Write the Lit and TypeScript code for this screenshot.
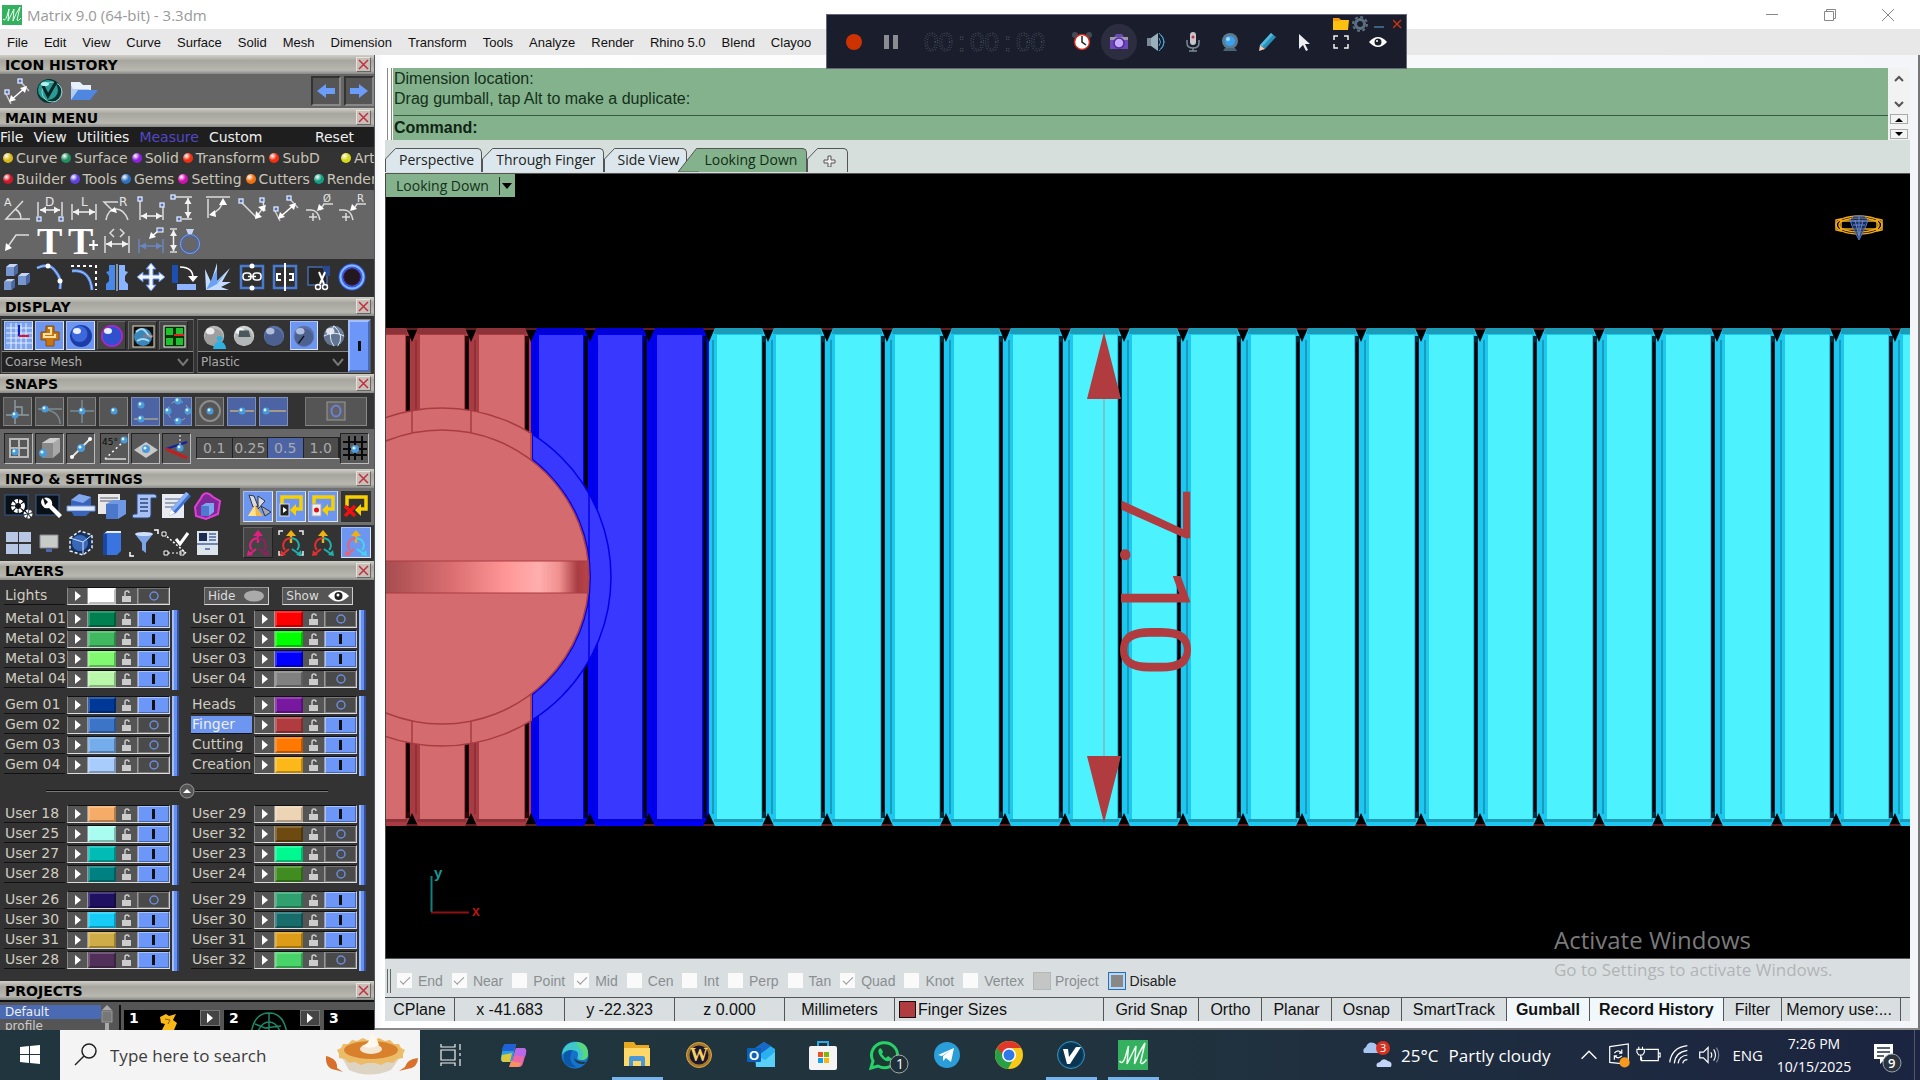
import { LitElement, html, css, svg, nothing } from "lit";
import { customElement } from "lit/decorators.js";
import { classMap } from "lit/directives/class-map.js";

type Layer = [name: string, color: string, on: boolean];

/* ---------- small drawing helpers ---------- */
const arrowH = (a: number, b: number, y: number, c = "#f2f2f2") =>
  svg`<path d="M${a} ${y}H${b}" stroke=${c} stroke-width="1.5"/><path fill=${c} d="M${a} ${y}l6-3.5v7zM${b} ${y}l-6-3.5v7z"/>`;
const arrowV = (a: number, b: number, x: number, c = "#f2f2f2") =>
  svg`<path d="M${x} ${a}V${b}" stroke=${c} stroke-width="1.5"/><path fill=${c} d="M${x} ${a}l-3.5 6h7zM${x} ${b}l-3.5-6h7z"/>`;
const knot = (x: number, y: number) =>
  svg`<rect x=${x - 2} y=${y - 2} width="4" height="4" fill="#5070b8" stroke="#dfe8ff" stroke-width="1.3"/>`;
const bead = (x: number, y: number, r = 3.5) =>
  svg`<circle cx=${x} cy=${y} r=${r} fill="#4a9ad8"/><circle cx=${x - 1} cy=${y - 1} r=${r / 2.5} fill="#d8f2ff"/>`;
const line = (d: string, c = "#dcdcdc", w = 1.5) =>
  svg`<path d=${d} fill="none" stroke=${c} stroke-width=${w}/>`;
const glyph = (t: string, x: number, y: number, size: number, c = "#e6e6e6") =>
  svg`<text x=${x} y=${y} font-size=${size} font-family="DejaVu Sans, sans-serif" fill=${c}>${t}</text>`;
const gumball = (a: string, b: string, c: string) => svg`
  <path d="M14 14V5" stroke=${a} stroke-width="2.4"/><path d="M14 1l-5 6h10z" fill=${a}/>
  <path d="M14 9C5 10 5 18 8 21M12 20L6 25" fill="none" stroke=${b} stroke-width="2"/><path d="M3 27l1-6 5 5z" fill=${b}/>
  <path d="M14 9C23 10 23 18 20 21M15 20L22 25" fill="none" stroke=${c} stroke-width="2"/><path d="M25 27l-1-6-5 5z" fill=${c}/>`;
const corners = line("M2 6V2H6M22 2H26V6M26 22V26H22M6 26H2V22", "#f0f0f0");
const cube = (x: number, y: number, s: number) => svg`
  <path d="M${x} ${y + s * 0.25}l${s * 0.3} ${-s * 0.25}h${s * 0.7}l${-s * 0.3} ${s * 0.25}z" fill="#c4d6f4"/>
  <path d="M${x} ${y + s * 0.25}h${s * 0.7}v${s * 0.75}h${-s * 0.7}z" fill="#7796d0"/>
  <path d="M${x + s * 0.7} ${y + s * 0.25}l${s * 0.3} ${-s * 0.25}v${s * 0.75}l${-s * 0.3} ${s * 0.25}z" fill="#4a68a8"/>`;
const yellowLoop = svg`<path d="M5 14V5H24V17H18" fill="none" stroke="#f8d000" stroke-width="3.500"/><path d="M13 18l6-6v12z" fill="#f8d000"/>`;
const mLogo = svg`<rect width="20" height="20" fill="#34b05e"/><path d="M1 14Q3 17 5 11L7 4 6 16Q10 8 12 4L11 16Q14 8 18 2L15 15Q16 17 19 13" fill="none" stroke="#eafff0" stroke-width="1"/>`;
const ball = (fill: string, hi = "#fff") =>
  svg`<circle cx="14" cy="14" r="11" fill=${fill}/><circle cx="14" cy="16" r="10" fill="#000" opacity=".14"/><ellipse cx="10" cy="9" rx="4.5" ry="3.5" fill=${hi} opacity=".8"/>`;

/* Icons share a 28 by 28 grid. */
const I: Record<string, unknown> = {
  measure: svg`${line("M4 17L9 27M18 4L27 14", "#c8c8c8")}${line("M8 24L24 10", "#fff")}<path d="M7 25l2-7 5 5zM25 9l-7 2 5 5z" fill="#fff"/>${knot(5, 15)}${knot(18, 4)}`,
  vball: svg`<circle cx="13" cy="14" r="12" fill="#06302f"/><circle cx="12" cy="13" r="10" fill="#2a9a94"/><circle cx="16" cy="15" r="10" fill="none" stroke="#7fd8d0"/><path d="M7 9l5 10 8-14" fill="none" stroke="#052423" stroke-width="3"/><ellipse cx="9" cy="7" rx="4" ry="2" fill="#b8f0ec"/>`,
  folder: svg`<path d="M1 5h9l3 3h8v5H1z" fill="#e8f0fc"/><path d="M1 8v15h18V12H3z" fill="#b4cdf4"/><path d="M1 23l7-10h20l-8 10z" fill="#4f86e0"/>`,
  back: svg`<path d="M5 14l9-7v4h9v6h-9v4z" fill="#6a9cf8"/>`,
  fwd: svg`<path d="M23 14l-9-7v4H5v6h9v4z" fill="#6a9cf8"/>`,
  angle: svg`${line("M27 25H3L20 7M12 15q6 3 6 10")}${glyph("A", 1, 12, 11)}`,
  dimD: svg`${line("M2 8V22M26 8V22")}${arrowH(4, 24, 16)}${knot(3, 25)}${knot(25, 25)}${glyph("D", 9, 12, 12)}`,
  dimL: svg`${line("M2 10V26M26 10V26")}${arrowH(3, 25, 18)}${glyph("L", 11, 12, 12)}`,
  dimR: svg`${line("M15 8H1l8 8M3 26q2-11 10-11t12 11")}<path d="M14 19l-7-2 5-4z" fill="#fff"/>${glyph("R", 16, 12, 12)}`,
  dimH: svg`${line("M3 7V26M26 12V26")}${arrowH(4, 25, 22)}${knot(3, 5)}${knot(25, 11)}`,
  dimV: svg`${line("M5 3H22M12 25H22")}${arrowV(4, 24, 18)}${knot(3, 3)}${knot(9, 25)}`,
  ordinate: svg`${line("M2 3H26M4 5V24M7 20Q18 16 19 6")}<path d="M19 4l4 7h-8zM5 21l6-5 1 7z" fill="#fff"/>`,
  dimA: svg`${line("M3 8L19 24M25 8L27 17M19 22L25 14")}<path d="M17 25l1-8 6 6zM28 11l-8 2 6 5z" fill="#fff"/>${knot(3, 7)}${knot(24, 6)}`,
  diam: svg`${line("M28 10H19L15 16M1 16h5q7 0 9 10M4 23h8M8 19v8")}<path d="M12 17l2-7 5 5z" fill="#fff"/>${glyph("Ø", 18, 8, 10)}`,
  rad: svg`${line("M28 10H19L15 16M1 16h5q7 0 9 10M4 23h8M8 19v8")}<path d="M12 17l2-7 5 5z" fill="#fff"/>${glyph("R", 19, 8, 10)}`,
  leader: svg`${line("M4 21L13 8H26")}<path d="M2 24l1-8 6 5z" fill="#fff"/>`,
  text: svg`<text x="1" y="27" font-family="Liberation Serif, serif" font-weight="700" font-size="38" fill="#fff">T</text>`,
  textPlus: svg`<text x="-2" y="27" font-family="Liberation Serif, serif" font-weight="700" font-size="38" fill="#fff">T</text>${line("M19 18h9M23.500 13v10", "#fff", 2)}`,
  dimAng: svg`${line("M2 9V26M26 9V26M11 2L7 6l4 4M17 2l4 4-4 4")}${arrowH(3, 25, 17)}`,
  dimLead: svg`${line("M2 12V26M26 12V26", "#6a86c0")}${arrowH(3, 25, 19, "#6a86c0")}${line("M14 10L21 4", "#fff")}<path d="M12 12l2-7 5 5z" fill="#fff"/><rect x="20" y="1" width="6" height="4" fill="#5070b8" stroke="#fff"/>`,
  ring: svg`${line("M0 2H7M0 25H7")}${arrowV(3, 24, 3.5)}<circle cx="20" cy="17" r="9" fill="none" stroke="#4a66a8" stroke-width="3"/><circle cx="20" cy="17" r="9.500" fill="none" stroke="#86a0dc"/><path d="M16 2h8l-2 5h-4z" fill="#c8d4f0"/>`,
  cubes: svg`${cube(3, 1, 12)}${cube(15, 10, 12)}${cube(1, 16, 11)}`,
  arc: svg`${line("M1 5Q14-1 20 9 26 16 24 26", "#5a8ae8", 3)}${line("M1 5Q14-1 20 9 26 16 24 26", "#a8c8ff", 1)}<circle cx="12" cy="3" r="2.500" fill="#fff"/><circle cx="24" cy="18" r="2.500" fill="#fff"/>`,
  arcDots: svg`${line("M2 8Q20 6 22 27", "#5a8ae8", 3)}${line("M2 8Q20 6 22 27", "#a8c8ff", 1)}<path d="M1 3H26V27" stroke="#fff" stroke-width="2" stroke-dasharray="3 3" fill="none"/>`,
  puzzle: svg`<path d="M12 2H6v6l-3 1 3 4v5l-3 3v6h9z" fill="#4a88e8"/><path d="M16 2h6v6l3 1-3 4v5l3 3v6h-9z" fill="#89b4ff"/><path d="M14 1V28" stroke="#e8f0ff"/>`,
  move: svg`<path d="M14 0l5 6h-3v6h6V9l6 5-6 5v-3h-6v6h3l-5 6-5-6h3v-6H6v3l-6-5 6-5v3h6V6H9z" fill="#f2f6ff" stroke="#5a8ae8"/>`,
  rotate: svg`<path d="M2 2h6v18H2z" fill="#1b4fb0"/><path d="M7 21h19v6H7z" fill="#8fb4ff"/>${line("M10 4Q23 4 23 15", "#fff")}<path d="M18 13h10l-5 6z" fill="#fff"/>`,
  burst: svg`<path d="M2 27L1 6l6 13L13 0v18L26 5 18 19l9 0-10 5 8 3z" fill="#c4dcff"/><path d="M2 27L13 6v13L22 10 13 21z" fill="#6ca0f4"/>`,
  link: svg`<rect x="3" y="3" width="22" height="22" fill="none" stroke="#4a7ad0" stroke-width="2.500"/><rect x="5" y="10" width="8" height="7" rx="3" fill="none" stroke="#fff" stroke-width="1.500"/><rect x="15" y="10" width="8" height="7" rx="3" fill="none" stroke="#fff" stroke-width="1.500"/><path d="M10 13.500h8" stroke="#fff" stroke-width="1.500"/><circle cx="14" cy="3" r="2.500" fill="#fff"/><circle cx="14" cy="25" r="2.500" fill="#fff"/>`,
  unlink: svg`<rect x="3" y="3" width="22" height="22" fill="none" stroke="#4a7ad0" stroke-width="2.500"/><path d="M10 11H6v6h4M18 11h4v6h-4" stroke="#fff" stroke-width="2" fill="none"/><path d="M14 0V28" stroke="#fff" stroke-width="2"/>`,
  cut: svg`<path d="M3 4H22V22H3z" fill="#222" stroke="#4a6aa8" stroke-width="1.500"/><path d="M17 3H25V13H20z" fill="#2a4a90"/><path d="M14 9l5 12M20 9l-5 12" stroke="#fff" stroke-width="2"/><circle cx="13" cy="24" r="2.500" fill="none" stroke="#fff" stroke-width="1.500"/><circle cx="20" cy="24" r="2.500" fill="none" stroke="#fff" stroke-width="1.500"/>`,
  torus: svg`<circle cx="14" cy="14" r="11" fill="#241820" stroke="#2c60e8" stroke-width="5"/><circle cx="14" cy="14" r="11.500" fill="none" stroke="#8cb4ff" stroke-width="2"/><circle cx="14" cy="14" r="8" fill="none" stroke="#501030"/>`,
  grid: svg`<path d="M1 1H27V27H1z" fill="#7ea4ec"/>${line("M1 6H27M1 11H27M1 16H27M1 21H27M6 1V27M11 1V27M16 1V27M21 1V27", "#e4edff", 1)}${line("M14 3V14", "#1020c0", 2)}${line("M14 14H24", "#e01030", 2)}`,
  jack: svg`<path d="M10 4h8v6h5v8h-5v6h-8v-6H5v-8h5z" fill="#c87410" stroke="#8a4c08"/><path d="M12 6h3v6H8v3h11v-3" stroke="#ffe0a0" fill="none" stroke-width="2"/>`,
  ballBlue: svg`<circle cx="14" cy="14" r="11" fill="#1c3ca8"/><circle cx="12.500" cy="12" r="8" fill="#3c68dc"/><ellipse cx="10" cy="9" rx="4" ry="3" fill="#e8f0ff"/>`,
  ballPink: svg`<circle cx="14" cy="14" r="11" fill="#c020c8"/><circle cx="14" cy="14" r="9.500" fill="#3050d0"/><ellipse cx="10" cy="9" rx="4" ry="3" fill="#e8f0ff"/>`,
  globe: svg`<rect x="4" y="4" width="21" height="21" fill="#111" stroke="#e8e0c0"/><circle cx="14" cy="15" r="9" fill="#3a86b8"/><path d="M7 10q6-6 10 0t6 4M8 19q6-4 12 0" stroke="#a4d8f4" stroke-width="2" fill="none"/>${line("M14 14H24", "#f06040", 1)}`,
  views: svg`<rect x="4" y="4" width="21" height="21" fill="#063006" stroke="#e8f8e8"/><path d="M6 6h7v7H6zM16 6h7v7h-7zM6 16h7v7H6zM16 16h7v7h-7z" fill="#20c030"/>${line("M14 13H24", "#e02020", 2)}`,
  matUser: svg`${ball("#b8b8b8")}<circle cx="20" cy="17" r="3" fill="#30b0e0"/><path d="M13 28q1-8 7-8t7 8z" fill="#30b0e0"/>`,
  matBox: svg`${ball("#d0d4d4")}<path d="M9 8h10l2 7H8z" fill="#4a585c"/>`,
  matSphere: ball("#5a72a8", "#c8d4f0"),
  matDisplay: svg`${ball("#5a72a8", "#c8d4f0")}${line("M14 14L8 22", "#111")}`,
  matWire: svg`${ball("#7288a8")}${line("M3 14Q14 8 25 14M14 3Q6 14 14 25M14 3Q26 14 18 25", "#e8f0ff", 1)}`,
  sPerp: svg`${line("M11 3V27M2 18H25M11 10H18V18", "#8a9aa0")}${bead(11, 18)}`,
  sTan: svg`${line("M2 12H26M2 12Q24 12 24 27", "#7c8a90")}${bead(9, 12)}`,
  sInt: svg`${line("M14 3V26M2 14H26", "#7c8a90")}${bead(14, 14)}`,
  sPoint: bead(14, 14),
  sMid2: svg`${line("M2 22H26", "#a8a090")}${bead(9, 8)}${bead(9, 22)}`,
  sQuad: svg`<circle cx="14" cy="14" r="10" fill="none" stroke="#a0a8b0" stroke-dasharray="4 4"/>${bead(14, 4)}${bead(4, 14)}${bead(24, 14)}${bead(14, 24)}`,
  sCen: svg`<circle cx="14" cy="14" r="10" fill="none" stroke="#8c8c8c" stroke-width="2"/>${bead(14, 14)}`,
  sMid: svg`${line("M2 14H26", "#a89888", 2)}${bead(14, 14)}`,
  sEnd: svg`${line("M8 14H26", "#a89888", 2)}${bead(6, 14)}`,
  sO: svg`<rect x="5" y="5" width="18" height="18" fill="#626262" stroke="#999"/><ellipse cx="14" cy="14" rx="4.500" ry="5.500" fill="none" stroke="#6c80d8" stroke-width="2"/>`,
  gCplane: svg`${line("M5 5H23V23H5zM14 5V23M5 14H23", "#b8b8b8", 2)}${bead(10, 18)}`,
  gCube: svg`<path d="M6 9l8-5h10v14l-7 6H6z" fill="#a8a8a8"/><path d="M6 9h11v15H6z" fill="#888"/><path d="M6 9l8-5h10l-7 5z" fill="#ccc"/>${bead(7, 19, 4)}`,
  gLine: svg`${line("M5 23L23 5", "#e0e0e0", 2)}<circle cx="5" cy="23" r="2" fill="#fff"/><circle cx="23" cy="5" r="2" fill="#fff"/>${bead(14, 14, 4)}`,
  g45: svg`<path d="M4 25L22 8" stroke="#fff" stroke-width="1.500" stroke-dasharray="2 3"/>${line("M4 25H25")}${glyph("45°", 1, 11, 9, "#0a0a0a")}${bead(23, 6)}`,
  gPlane: svg`<path d="M2 16l12-8 12 8-12 8z" fill="#c8c8c8"/>${bead(14, 15, 4)}`,
  gAxis: svg`${line("M3 15L24 8", "#1020a0", 2)}${line("M3 15L24 24", "#c02020", 3)}<path d="M17 1V14" stroke="#fff" stroke-dasharray="2 2"/>${bead(17, 14)}`,
  gHash: svg`${line("M8 2V26M14 2V26M21 2V26M2 8H26M2 15H26M2 21H26", "#0a0a0a", 2)}${bead(14, 15, 4)}`,
  iGears: svg`<rect x="1" y="3" width="23" height="20" fill="#0a1018" stroke="#3a5a90"/><circle cx="14" cy="14" r="5" fill="none" stroke="#fff" stroke-width="4" stroke-dasharray="3 1"/><circle cx="24" cy="22" r="3" fill="none" stroke="#fff" stroke-width="3" stroke-dasharray="2 1"/>`,
  iWrench: svg`<rect x="1" y="3" width="23" height="20" fill="#0a1018" stroke="#3a5a90"/><path d="M8 6a6 6 0 0 0 6 10l10 10 3-3-10-10a6 6 0 0 0-8-7l4 4-3 3z" fill="#fff"/>`,
  iBox: svg`<path d="M4 8l8-6 12 3v9l-8 2-12-2z" fill="#3a64b8"/><path d="M4 8l8-6 12 3-8 6z" fill="#84a8ec"/><path d="M0 14h28v5H0z" fill="#dde8fc" stroke="#6c94e0"/><path d="M4 19h20l-5 5H7z" fill="#3a64b8"/>`,
  iDocBox: svg`<path d="M0 2h22v20H0z" fill="#e8e8e8"/>${line("M2 6h18M2 9h18", "#889")}<path d="M8 12l7-4h13v14l-8 5H8z" fill="#6e98e4"/><path d="M8 12h12v15H8z" fill="#4c78cc"/>`,
  iScroll: svg`<path d="M7 2h17q3 0 3 4h-6v17q0 3-3 3H3q-2-3 1-4h3z" fill="#a8c0f4" stroke="#28487c"/>${line("M10 7h8M10 11h8M10 15h8M10 19h8", "#28487c")}`,
  iEdit: svg`<path d="M1 2h22v24H1z" fill="#e8ecf2"/>${line("M4 7h16M4 11h14M4 15h10", "#8090a8")}<path d="M25 0l5 4L15 21l-7 3 2-7z" fill="#3c70d0"/><path d="M25 0l3 2L13 19l-3-2z" fill="#8cb0f4"/><path d="M8 24l2-7 4 4z" fill="#fff"/>`,
  iBag: svg`<path d="M2 15L8 6Q12-3 20 5L27 9 25 22 13 27 3 24z" fill="#802898" stroke="#e040d8" stroke-width="2"/><path d="M8 14l5-3h8v9l-5 4H8z" fill="#7ea4f0"/><path d="M8 14h8v10H8z" fill="#5078d0"/>`,
  iViews: svg`<path d="M2 3h12v10H2zM15 3h12v10H15zM2 15h12v10H2zM15 15h12v10H15z" fill="#b8c8e4"/>`,
  iMonitor: svg`<path d="M5 6h18v13H5z" fill="#c8ccc8" stroke="#889"/><path d="M11 20h6v3h-6z" fill="#4a6ab0"/>`,
  iWire: svg`<path d="M3 9l10-7 12 4v13l-9 7L3 22z" fill="#16305c" stroke="#f0f0f0" stroke-width="1.500" stroke-dasharray="3 2"/><circle cx="13" cy="14" r="8" fill="#3a68b8"/>${line("M3 9l13 4 9-7M16 13v13", "#cfe0ff", 1)}`,
  iBook: svg`<path d="M5 5l4-3h14v20l-4 4H5z" fill="#3a74e0"/><path d="M9 2h14v2H7z" fill="#e4ecff"/><path d="M5 5h4v21H5z" fill="#1a48a0"/>`,
  iFunnel: svg`<path d="M5 5h18l-7 9v10l-4-3v-7z" fill="#7ea4e8"/><ellipse cx="14" cy="5" rx="9" ry="2" fill="#cfe0ff"/>${line("M24 1h4v4M0 23v4h4", "#fff")}`,
  iCheck: svg`<path d="M3 5L25 24" stroke="#fff" stroke-dasharray="2 2" stroke-width="1.500"/>${line("M15 10l4 5 8-11", "#fff", 3)}<path d="M1 3h4v4H1zM3 22h4v4H3zM19 22h4v4h-4z" stroke="#fff" fill="#222"/><path d="M7 24H26" stroke="#fff" stroke-dasharray="2 2"/>`,
  iReport: svg`<path d="M4 2h21v24H4z" fill="#dde4ec"/><path d="M6 4h8v8H6z" fill="#1c2c50"/>${line("M16 5h7M16 8h7M16 11h7M4 15h21M12 20h5", "#4868a0")}`,
  iBroom: svg`<path d="M5 3l5 1 4 10-5 1zM14 4l7 5-7 8z" fill="#d8dce0" stroke="#334"/><path d="M4 24l7-11 8 11z" fill="#f0b848"/><path d="M4 24l7-11 1 11z" fill="#ffe08c"/><path d="M17 14l10 6-6 4z" fill="#a0a8b4" stroke="#334"/>`,
  iPlay: svg`${yellowLoop}<rect x="3" y="12" width="9" height="12" fill="#222" stroke="#ddd"/><path d="M6 15l4 3-4 3z" fill="#fff"/>`,
  iRec: svg`${yellowLoop}<rect x="3" y="12" width="9" height="12" fill="#eee" stroke="#aaa"/><circle cx="7.500" cy="18" r="2.500" fill="#e01010"/>`,
  iDel: svg`${yellowLoop}${line("M3 14L13 24M13 14L3 24", "#f01010", 3.5)}`,
  gumA: gumball("#e02080", "#e02080", "#902060"),
  gumB: svg`${corners}${gumball("#f0b010", "#e03030", "#20b0b0")}`,
  gumC: gumball("#f0b010", "#e03030", "#20b0b0"),
  gumD: gumball("#f0b010", "#f06070", "#40d8e8"),
  record: svg`<circle cx="14" cy="14" r="8" fill="#cc3300"/>`,
  pause: svg`<path d="M7 7h5v14H7zM16 7h5v14h-5z" fill="#8a8c92"/>`,
  alarm: svg`<circle cx="7" cy="7" r="3" fill="#444a55"/><circle cx="21" cy="7" r="3" fill="#444a55"/><circle cx="14" cy="14" r="7.500" fill="#fff" stroke="#cc2a1e" stroke-width="1.500"/><path d="M14 8v6l4 3" fill="none" stroke="#222" stroke-width="1.500"/>`,
  camera: svg`<path d="M5 9h4l2-3h6l2 3h4v12H5z" fill="#6c48b8"/><path d="M5 9h18v3H5z" fill="#9a9aa8"/><circle cx="14" cy="15" r="5" fill="#c8a8ff" stroke="#4c2a94" stroke-width="1.500"/>`,
  speaker: svg`<path d="M5 10h4v8H5z" fill="#7a8a96"/><path d="M9 10l7-5v18l-7-5z" fill="#9ab0bc"/>${line("M17 10q3 4 0 8M19 7q6 7 0 14M17 5q10 9 0 18", "#4aa8d8", 1)}`,
  mic: svg`<rect x="11" y="4" width="6" height="13" rx="3" fill="#c8c4cc"/><circle cx="14" cy="9" r="1.500" fill="#d03040"/>${line("M8 12v3q0 5 6 5t6-5v-3M14 20v3M10 23h8", "#7c8a98", 1.5)}`,
  webcam: svg`<circle cx="14" cy="13" r="8" fill="#5a7c90"/><circle cx="14" cy="13" r="5" fill="#3aa0f0"/><circle cx="12" cy="11" r="2" fill="#a8dcff"/><path d="M9 20h10l2 3H7z" fill="#4a6474"/>`,
  pencil: svg`<path d="M18 5l5 4L12 21l-5-4z" fill="#2a90b8"/><path d="M7 17l5 4-6 2z" fill="#f4c8b0"/><path d="M18 5l2 2L9 19l-2-2z" fill="#50b8dc"/>`,
  cursor: svg`<path d="M9 6v15l4-4 3 6 2-1-3-6h5z" fill="#eceef2"/>`,
  expand: line("M7 12V8H11M17 8H21V12M21 16V20H17M11 20H7V16", "#f2f2f2", 1.5),
  eye: svg`<path d="M5 14q9-10 18 0-9 10-18 0z" fill="#fff"/><circle cx="14" cy="14" r="3.500" fill="#1a1e2a"/><circle cx="13" cy="13" r="1" fill="#fff"/>`,
  /* taskbar */
  windows: svg`<path d="M4 6l9-1v8H4zM14 5l10-1v9H14zM4 14h9v8l-9-1zM14 14h10v9l-10-1z" fill="#fff"/>`,
  taskview: line("M4 9H18V19H4zM4 3V6H18V3M4 25V22H18V25M23 3V9M23 12V15M23 18V25", "#f0f0f0", 1.2),
  copilot: svg`<path d="M7 3h10l-4 18H5Q1 21 2 16L4 6q1-3 3-3z" fill="#28a0e0"/><path d="M7 3h10l-2 7H3L4 6q1-3 3-3z" fill="#2060d8"/><path d="M3 14l10-2-2 9H5q-4 0-2-7z" fill="#d8c840"/><path d="M17 7h7q4 0 3 5l-3 10q-1 4-4 4H11z" fill="#e868a8"/><path d="M17 7h7q4 0 3 5l-1 4-11-2z" fill="#b868e8"/><path d="M12 20l10 2q-1 4-4 4h-8z" fill="#f89060"/>`,
  edge: svg`<circle cx="14" cy="14" r="13.500" fill="#1474cc"/><path d="M1 13Q3 1 15 1t12 12q0 6-7 6-5 0-3-4 1-6-6-6Q4 9 1 14z" fill="#40c8c8"/><path d="M15 1q12 1 12 12 0 6-7 6 5-8-2-13z" fill="#58d878"/><path d="M10 13q-3 8 5 13Q6 27 3 20 1 9 11 9z" fill="#0c58a8"/><path d="M13 15q0 6 12 6l-2 2q-10 1-10-8z" fill="#203840"/>`,
  explorer: svg`<path d="M1 1h10l2 3h13v6H1z" fill="#e8a820"/><path d="M1 7h26v18H1z" fill="#ffd867"/><path d="M6 25v-8q0-2 2-2h12q2 0 2 2v8h-4v-5h-8v5z" fill="#4a98d8"/>`,
  wcoin: svg`<circle cx="14" cy="14" r="11" fill="#181830" stroke="#a87828" stroke-width="3"/><circle cx="14" cy="14" r="12.500" fill="none" stroke="#d8a848"/><text x="5" y="20" font-family="Liberation Serif, serif" font-weight="700" font-size="18" fill="#f8d060">W</text>`,
  outlook: svg`<path d="M7 8L17 1l11 7v18H9z" fill="#2ab0f0"/><path d="M7 8L17 1l7 4-12 9z" fill="#1868c8"/><path d="M9 14l9 5 10-8v15H9z" fill="#58d0f8"/><rect x="0" y="7" width="14" height="14" rx="1" fill="#0c60b8"/><text x="2" y="19" font-family="Liberation Sans, sans-serif" font-weight="700" font-size="13" fill="#fff">O</text>`,
  store: svg`<path d="M9 6V1h10v5" fill="none" stroke="#30a8e8" stroke-width="2"/><rect x="0" y="5" width="28" height="24" rx="2" fill="#f4f4f4"/><path d="M9 11h5v5H9z" fill="#f05020"/><path d="M15 11h5v5h-5z" fill="#80b810"/><path d="M9 17h5v5H9z" fill="#10a0e8"/><path d="M15 17h5v5h-5z" fill="#f8b810"/>`,
  whatsapp: svg`<path d="M0 27l2-7a13 12.500 0 1 1 5 5z" fill="#1c3a34" stroke="#28d068" stroke-width="3"/><path d="M8 8q2-2 3 1l1 2-1 2q2 3 4 4l2-2 3 2q1 2-2 3-4 1-8-4-4-5-2-8z" fill="#28d068"/><circle cx="28" cy="23" r="9" fill="#203038" stroke="#a8a8a8"/><text x="25" y="28" font-family="Open Sans, sans-serif" font-size="14" fill="#fff">1</text>`,
  telegram: svg`<circle cx="14" cy="14" r="13" fill="#2a9ed8"/><path d="M5 14L21 7l-3 14-5-4-3 3v-5l8-6-9 6z" fill="#fff"/>`,
  chrome: svg`<circle cx="14" cy="14" r="14" fill="#f8c818"/><path d="M1.900 7A14 14 0 0 1 26.100 7H14L8 17z" fill="#e03828"/><path d="M1.900 7A14 14 0 0 0 13 28l6-11-9-1z" fill="#28a048"/><circle cx="14" cy="14" r="7" fill="#fff"/><circle cx="14" cy="14" r="5.500" fill="#3078e8"/>`,
  vapp: svg`<circle cx="14" cy="14" r="13.500" fill="#0c4468" stroke="#3a90b8"/><circle cx="14" cy="14" r="11.500" fill="#0a3450"/><path d="M6 8h5l1 8 7-10h5L13 23h-3z" fill="#fff"/>`,
  matrix: svg`<g transform="translate(-1 -1) scale(1.500)">${mLogo}</g>`,
  weather: svg`<path d="M24 12a9 9 0 1 1-18 11 10 10 0 0 0 18-11z" fill="#f8a830"/><path d="M1 12q-2-4 2-6 2-6 8-4 4 2 3 5 3 1 1 5z" fill="#a8c4f0"/><path d="M14 26q-2-4 3-5 3-5 8-1 5 1 3 6z" fill="#c4d4f8"/><circle cx="20" cy="7" r="7" fill="#d83020"/><text x="17" y="11" font-family="Open Sans, sans-serif" font-size="11" fill="#fff">3</text>`,
  chevUp: line("M6 18l8-8 8 8", "#fff", 1.5),
  sync: svg`${line("M4 5L24 2V24L4 22z", "#fff", 1.3)}${line("M9 12q4-5 8 0M17 15q-4 4-8 0M17 8v4h-3M9 19v-4h3", "#fff", 1.3)}<circle cx="20" cy="22" r="5.500" fill="#f8981c"/>`,
  battery: svg`${line("M10 8H24V20H6V16M24 12H26V16H24M3 5V8M7 5V8M1 8H9V11L7 14H3L1 11zM5 14V20", "#fff", 1.2)}`,
  wifi: svg`${line("M4 22Q6 6 23 4M9 23Q10 11 23 9", "#fff", 1.3)}${line("M13 23Q14 15 23 14M18 23q1-4 5-4", "#fff", 1.3)}`,
  sound: svg`${line("M4 11H8L13 6V22L8 17H4z", "#fff", 1.3)}${line("M16 11q2 3 0 6M19 8q4 6 0 12", "#fff", 1.2)}${line("M22 6q5 8 0 16", "#7a8498", 1.3)}`,
  notes: svg`<path d="M4 3h19v15h-8l-5 5v-5H4z" fill="#fff"/>${line("M7 7H20M7 11H20M7 15H14", "#20304a", 1.5)}<circle cx="22" cy="22" r="9" fill="#2c3440" stroke="#98a0a8"/><text x="18" y="27" font-family="Open Sans, sans-serif" font-weight="600" font-size="13" fill="#fff">9</text>`,
};

const icon = (name: string, cls = "i28") =>
  html`<svg class=${cls} viewBox="0 0 28 28" aria-hidden="true">${I[name]}</svg>`;
const tool = (name: string, cls = "tool") =>
  html`<button class=${cls} aria-label=${name}>${icon(name)}</button>`;

/* ---------- data ---------- */
const MENU = ["File", "Edit", "View", "Curve", "Surface", "Solid", "Mesh", "Dimension", "Transform", "Tools", "Analyze", "Render", "Rhino 5.0", "Blend", "Clayoo", "Help"];
const CATEGORIES = [
  [["Curve", "#d8b818"], ["Surface", "#209060"], ["Solid", "#9020e0"], ["Transform", "#f03010"], ["SubD", "#f03010"], ["Art", "#d8d818"]],
  [["Builder", "#d01828"], ["Tools", "#6040e0"], ["Gems", "#3070c0"], ["Setting", "#d010b0"], ["Cutters", "#f07010"], ["Render", "#10a080"]],
];
const LAYERS: [Layer[], Layer[]][] = [
  [
    [["Metal 01", "#008050", true], ["Metal 02", "#40b860", true], ["Metal 03", "#80f870", true], ["Metal 04", "#b8f8a8", true]],
    [["User 01", "#ff0000", false], ["User 02", "#00ff00", true], ["User 03", "#0000ff", true], ["User 04", "#808080", false]],
  ],
  [
    [["Gem 01", "#003898", true], ["Gem 02", "#3c74c8", false], ["Gem 03", "#74acec", false], ["Gem 04", "#a8ccfc", false]],
    [["Heads", "#7818a0", false], ["Finger", "#b03c40", true], ["Cutting", "#ff7800", true], ["Creation", "#fcb818", true]],
  ],
  [
    [["User 18", "#f4ac68", true], ["User 25", "#a8fcf0", true], ["User 27", "#00bcb4", true], ["User 28", "#008080", true]],
    [["User 29", "#ecd4b4", true], ["User 32", "#6c4a10", false], ["User 23", "#00f890", false], ["User 24", "#408c20", false]],
  ],
  [
    [["User 26", "#201060", false], ["User 30", "#18ccf8", true], ["User 31", "#d0ac48", true], ["User 28", "#503058", true]],
    [["User 29", "#30a070", true], ["User 30", "#186c6c", true], ["User 31", "#dc9c18", true], ["User 32", "#48d468", false]],
  ],
];
const OSNAPS: [string, boolean][] = [["End", true], ["Near", true], ["Point", false], ["Mid", true], ["Cen", false], ["Int", false], ["Perp", false], ["Tan", false], ["Quad", true], ["Knot", false], ["Vertex", false]];

/* ---------- viewport drawing ---------- */
const PITCH = 59.33;
const FIRST = 26 - PITCH;
const bar = (k: number) => {
  const x = Math.round(FIRST + k * PITCH);
  const w = Math.round(FIRST + (k + 1) * PITCH) - x;
  const kind = k < 3 ? 0 : k < 6 ? 1 : 2;
  const face = ["#d46c6f", "#3838ff", "#4df2ff"][kind];
  const edge = ["#a83c42", "#0000f4", "#1cc8f2"][kind];
  const shade = ["#8c3238", "#0000d8", "#1a9cb8"][kind];
  const dark = ["#280808", "#00003c", "#042c38"][kind];
  return svg`<g transform="translate(${x} 154)">
    <path d="M0 14L6 0H${w - 6}L${w} 14V485L${w - 6} 498H6L0 485z" fill=${edge}/>
    <path d="M6 0H${w - 6}L${w - 5} 6H5z" fill=${shade}/>
    <path d="M3 12H5V486H3zM5 491H${w - 5}V494H5z" fill=${shade}/>
    <rect x="8" y="7" width=${w - 15} height="484" fill=${face}/>
    <path d=${`M${w - 6} 8h4v482h-4z`} fill=${dark}/>
    <path d=${`M${w - 5} 14h2v470h-2z`} fill="#000"/>
  </g>`;
};

const viewport = svg`
  <defs>
    <linearGradient id="rod"><stop offset="0" stop-color="#a44a4e"/><stop offset=".35" stop-color="#dc7072"/><stop offset=".6" stop-color="#ff9696"/><stop offset=".76" stop-color="#ffaeae"/><stop offset=".86" stop-color="#f09090"/><stop offset=".95" stop-color="#a83c42"/><stop offset="1" stop-color="#b84448"/></linearGradient>
    <clipPath id="redSide"><rect x="-120" y="0" width="266" height="784"/></clipPath>
    <clipPath id="blueSide"><rect x="147" y="0" width="200" height="784"/></clipPath>
  </defs>
  <path d="M0 155H1524M0 651H1524" stroke="#b83c40"/>
  ${Array.from({ length: 27 }, (_, k) => bar(k))}
  <g clip-path="url(#blueSide)">
    <circle cx="56" cy="403" r="169" fill="#3838ff" stroke="#0000e8" stroke-width="1.500"/>
    <path d="M203 320V486" stroke="#0000e8" stroke-width="1.500"/>
  </g>
  <g clip-path="url(#redSide)">
    <circle cx="56" cy="403" r="169" fill="#d46c6f" stroke="#a83c42" stroke-width="1.500"/>
    <path d="M26 237V260M85 237V260M26 546V569M85 546V569M145 259V288M145 518V547" stroke="#a83c42" stroke-width="1.500"/>
  </g>
  <circle cx="56" cy="403" r="149" fill="#0000e8" clip-path="url(#blueSide)"/>
  <circle cx="56" cy="403" r="147" fill="#d46c6f" stroke="#a83c42" stroke-width="1.500"/>
  <rect x="-4" y="387" width="206" height="32" fill="url(#rod)" stroke="#a83c42"/>
  <path d="M718 224V582" stroke="#80b4bc" stroke-width="1.500"/>
  <path d="M718 158L735 225H701zM718 649L735 582H701z" fill="#b03c40"/>
  <text transform="translate(735 314) rotate(90)" font-family="Roboto, sans-serif" font-size="97" fill="#b03c40">7.10</text>
  <path d="M45.500 702V738" stroke="#108080" stroke-width="2"/><path d="M45 738.500H83" stroke="#901010" stroke-width="2"/>
  <text x="48" y="704" font-family="Liberation Sans, sans-serif" font-weight="700" font-size="15" fill="#189898">y</text>
  <text x="86" y="742" font-family="Liberation Sans, sans-serif" font-weight="700" font-size="14" fill="#b81810">x</text>
  <g fill="none" stroke="#f0a818" stroke-width="1.500">
    <ellipse cx="1473" cy="51" rx="23" ry="9"/><ellipse cx="1473" cy="51" rx="20" ry="7"/><path d="M1450 46l5-1v12l-5-1zM1496 46l-5-1v12l5-1zM1454 47H1492M1454 55H1492"/>
  </g>
  <path d="M1464 46l4-4h10l4 4-2 6-7 14-7-14z" fill="#24407c" fill-opacity=".7" stroke="#5478c8"/><path d="M1464 47h18M1467 51h12M1473 42V64M1469 46l4 16 4-16" stroke="#6488d8" fill="none"/>`;

@customElement("app-root")
export class AppRoot extends LitElement {
  static styles = css`
    :host { display: flex; flex-direction: column; height: 100vh; position: relative; overflow: hidden; background: #f6f7fa; color: #111; font-family: "Liberation Sans", Arial, sans-serif; font-size: 16px; }
    * { box-sizing: border-box; }
    button, input, select { font: inherit; color: inherit; margin: 0; padding: 0; border: 0; background: none; border-radius: 0; }
    button { display: flex; align-items: center; justify-content: center; }
    svg { display: block; flex: none; }
    .i28 { width: 28px; height: 28px; overflow: visible; }
    .i24 { width: 26px; height: 26px; }
    .i20 { width: 20px; height: 20px; overflow: visible; }

    .title { display: flex; align-items: center; height: 29px; flex: none; background: #fff; color: #999; font-family: "Open Sans", "Noto Sans", sans-serif; font-size: 15px; padding: 0 3px 0 2px; }
    .title span { margin-left: 5px; }
    .title .grow { flex: 1; }
    .title button { width: 58px; height: 29px; }
    .menu { display: flex; align-items: center; height: 26px; flex: none; background: #e8e8e8; padding-left: 7px; gap: 16px; font-size: 13px; }
    .work { display: flex; flex: 1; min-height: 0; }

    .side { width: 375px; flex: none; background: #333; overflow: hidden; color: #ddd; font-family: "DejaVu Sans", Verdana, sans-serif; font-size: 14px; border-right: 1px solid #555; }
    .head { display: flex; align-items: center; justify-content: space-between; height: 19px; padding: 0 3px 0 5px; background: linear-gradient(#d0d0c8, #a6a69e 30%, #b8b8b0 80%, #888); color: #000; }
    .head h2 { margin: 0; font-size: 14px; line-height: 18px; font-weight: 700; }
    .head button { width: 15px; height: 15px; background: #c8c0b8; border: 1px solid; border-color: #e4e4dc #666 #666 #e4e4dc; }
    .hist { display: flex; align-items: center; height: 34px; background: #666; padding-left: 2px; gap: 6px; }
    .hist .grow { flex: 1; }
    .hist .nav { width: 30px; height: 30px; margin-left: -3px; background: #555; border: 2px solid; border-color: #333 #888 #888 #333; }
    .tabs1 { display: flex; height: 20px; align-items: center; background: #1e1e1e; color: #eee; gap: 10px; padding-right: 20px; }
    .tabs1 .cur { color: #5248c8; }
    .tabs1 .last { margin-left: auto; }
    .cats { height: 43px; display: grid; grid-template-rows: 1fr 1fr; padding-left: 3px; overflow: hidden; }
    .cats div { display: flex; align-items: center; gap: 4px; white-space: nowrap; }
    .cats .push { margin-left: auto; padding-right: 2px; }
    .cat { gap: 3px; color: #c8c4b8; }
    .dot { width: 10px; height: 10px; border-radius: 50%; }
    .tools { display: grid; grid-template-columns: repeat(11, 1fr); height: 69px; background: #666; padding: 2px 5px 2px 0; }
    .tools.mods { height: 38px; background: #303030; padding: 0 5px 3px 0; }
    .tool { width: 100%; min-width: 0; }

    .display { display: flex; gap: 3px; height: 58px; padding: 3px 3px 1px 1px; }
    .group { display: flex; flex-direction: column; justify-content: space-between; border: 1px solid; border-color: #888 #555 #777 #555; }
    .group .icons { display: flex; gap: 2px; height: 31px; align-items: center; padding-left: 2px; }
    .btn { width: 29px; height: 29px; border: 1px solid; border-color: #666 #222 #222 #666; background: #444; }
    .btn.on { background: #6c96f0; border-color: #a8c0f8 #dde8ff #dde8ff #a8c0f8; }
    .btn.flat { background: none; border-color: transparent; }
    .pick { position: relative; display: flex; border-top: 1px solid #888; background: #222; }
    .pick select { appearance: none; width: 100%; height: 20px; padding-left: 3px; font-size: 12px; color: #aaa; }
    .pick svg { position: absolute; right: 4px; top: 6px; pointer-events: none; }
    .dl { width: 193px; }
    .dr { flex: 1; flex-direction: row; }
    .dr .col { flex: 1; display: flex; flex-direction: column; justify-content: space-between; }
    .dr .btn { width: 28px; }
    .dr .i28 { width: 26px; }
    .bigtog { width: 22px; background: #6c96f8; border: 2px solid; border-color: #a4c0fc #4a6ab8 #4a6ab8 #a4c0fc; }
    .bigtog i, .tog i { width: 3px; height: 10px; background: #111; }

    .snaps { height: 76px; display: flex; flex-direction: column; }
    .srow { display: flex; height: 36px; align-items: center; padding: 0 7px 0 3px; gap: 3px; }
    .srow .btn { height: 29px; background: #555; border-color: #777 #888 #888 #777; }
    .srow .btn.on { background: #4c64a4; border-color: #8090b8; }
    .srow .wide { width: 62px; margin-left: auto; }
    .srow2 { height: 40px; background: #666; padding: 0 5px 2px 4px; gap: 2px; }
    .srow2 .btn { height: 31px; background: #585858; border-color: #222 #bbb #bbb #222; }
    .srow2 .gap { margin-left: 3px; }
    .nums { display: flex; flex: 1; margin-left: 3px; height: 22px; border: 1px solid #222; border-bottom-color: #ccc; }
    .nums button { flex: 1; color: #aaa; background: #4c4c4c; border-right: 1px solid #222; }
    .nums .cur { background: #4c64a4; }
    .srow2 .hash { margin-left: -2px; }

    .info { height: 73px; display: grid; grid-template-columns: 240px 1fr; grid-template-rows: 1fr 1fr; }
    .info div { display: flex; align-items: center; justify-content: space-between; padding: 0 19px 0 3px; }
    .info .acts { padding: 0 3px; }
    .info .raised { background: #707070; }
    .info .tool { width: 29px; }
    .info .btn { width: 30px; height: 31px; }
    .info .plain { background: #333; border-color: #333; }

    .layers { padding: 7px 0 10px; height: 401px; }
    .lrow { display: flex; height: 18px; padding-left: 4px; gap: 2px; margin-bottom: 2px; }
    .name { width: 61px; flex: none; border-bottom: 1px solid #111; white-space: nowrap; line-height: 16px; color: #d0ccc0; padding-left: 1px; }
    .name.cur { background: #6c96f0; color: #eee; }
    .ctl { display: flex; width: 103px; border: 1px solid; border-color: #111 #ccc #ddd #888; background: #555; }
    .ctl button { border-right: 1px solid #999; height: 16px; }
    .ctl .ex { width: 20px; }
    .ctl .sw { width: 28px; border: 2px solid; border-color: #fff3 #0004 #0004 #fff3; }
    .ctl .lk { width: 22px; }
    .ctl .tog { width: 31px; background: #4a4a4a; border: 1px solid #777; }
    .ctl .tog.on { background: #6c96f8; border: 1px solid; border-color: #a8c4ff #4468b8 #4468b8 #a8c4ff; }
    .top { display: flex; margin-bottom: 3px; height: 20px; }
    .top .lrow { width: 204px; }
    .hs { height: 18px; gap: 9px; font-size: 12px; background: #555; border: 1px solid; border-color: #999 #ccc #ddd #888; padding: 0 3px; color: #ddd; margin-right: 13px; }
    .band { display: grid; grid-template-columns: 187px 187px; height: 80px; margin-bottom: 6px; }
    .half { display: grid; grid-template-columns: 172px 7px; }
    .strip { background: #6490f0; border-left: 2px solid #a4c0fc; border-right: 2px solid #34509c; }
    .fold { display: flex; align-items: center; height: 29px; padding: 0 46px; margin-top: -6px; }
    .fold hr { flex: 1; border: 0; height: 2px; background: #0c0c0c; border-bottom: 1px solid #777; margin: 0; }

    .proj { display: flex; height: 60px; background: #555; border-top: 2px solid #111; padding-top: 3px; font-size: 12px; }
    .proj ul { list-style: none; margin: 0; padding: 0; width: 101px; line-height: 14px; color: #ccc; }
    .proj li { padding: 0 5px; }
    .proj li.cur { background: #4a6ab4; color: #eee; }
    .bar { width: 12px; }
    .thumbs { flex: 1; display: flex; gap: 4px; margin-left: 6px; border-left: 2px solid #111; padding: 5px 0 0 3px; overflow: hidden; }
    .thumb { display: flex; justify-content: space-between; width: 96px; flex: none; background: #000; color: #fff; font-size: 14px; padding-left: 5px; }
    .thumb button { width: 20px; height: 16px; background: #444; border: 1px solid #777; }

    .main { flex: 1; min-width: 0; display: flex; flex-direction: column; padding: 13px 8px 0 10px; background: linear-gradient(90deg, #f4f5f8, #fff 8px, #f4f5f9); border-right: 2px solid #777; border-bottom: 2px solid #888; }
    .cmd { display: grid; grid-template-columns: 8px 1fr 22px; height: 72px; flex: none; }
    .grip { border-left: 1px solid #888; border-right: 1px solid #888; width: 5px; margin-left: 2px; }
    .out { background: #84b28c; line-height: 20px; padding-left: 1px; color: #14301a; font-size: 16px; display: flex; flex-direction: column; }
    .out .hist2 { height: 48px; border-bottom: 1px solid #3a5a40; padding-top: 1px; }
    .out p { margin: 0; }
    .out label { display: flex; font-weight: 700; color: #102414; height: 23px; align-items: center; }
    .out input { flex: 1; }
    .scroll { background: #f2f2f2; display: flex; flex-direction: column; align-items: center; justify-content: space-between; padding: 5px 1px 1px; }
    .scroll button { width: 18px; height: 10px; }
    .scroll .mini { border: 1px solid #aaa; background: #f4f4f4; }
    .scroll .low { margin-top: 11px; }
    .vtabs { display: flex; align-items: flex-end; height: 34px; flex: none; background: #d7dfdd; border-bottom: 1px solid #555; padding-bottom: 1px; font-family: "Open Sans", sans-serif; font-size: 14px; }
    .vt { height: 24px; color: #222; --tab: #dbe7ec; }
    .vt span { display: flex; align-items: center; height: 24px; padding: 0 7px 2px 1px; background: var(--tab); border: solid #555; border-width: 1px 1px 0 0; border-top-right-radius: 5px; }
    .vt path { fill: var(--tab); stroke: #555; }
    .vt.cur { --tab: #84b28c; margin-left: -9px; color: #102c14; }
    .vt.cur span { padding: 0 9px 2px 5px; }
    .vt.add { --tab: #d7dfdd; }
    .vt.add span { padding: 0 9px 0 1px; }
    .view { position: relative; flex: 1; min-height: 0; background: #000; border-left: 1px solid #444; }
    .view > svg { width: 100%; height: 100%; }
    .vname { position: absolute; left: 0; top: 0; height: 23px; background: #84b28c; color: #14301a; font-family: "Open Sans", sans-serif; font-size: 14px; padding: 0 2px 0 10px; gap: 10px; }
    .vname svg { border-left: 1px solid #222; }
    .osnap { display: flex; align-items: center; height: 39px; flex: none; background: #d9dfe1; padding-top: 5px; font-size: 14px; color: #8a8e90; gap: 9px; border-top: 1px solid #555; }
    .osnap .grip { height: 24px; margin: 0 -3px 0 2px; width: 4px; border-color: #666; }
    .osnap label { display: flex; align-items: center; gap: 6px; }
    .osnap input { appearance: none; width: 15px; height: 15px; background: #fafafa; display: grid; place-content: center; }
    .osnap input:checked::after { content: ""; width: 9px; height: 4px; border: solid #999; border-width: 0 0 1px 1px; transform: rotate(-45deg); margin-bottom: 3px; }
    .osnap .wide { gap: 4px; }
    .osnap .gray { width: 18px; height: 18px; background: #c4c6c6; border: 1px solid #b4b8b8; }
    .osnap .mixed { width: 18px; height: 18px; background: #888; border: 1px solid #2a6cb8; box-shadow: inset 0 0 0 2px #b8d8f4; }
    .osnap .act { color: #222; }
    .status { display: flex; height: 24px; flex: none; background: #d9dfe1; border-top: 1px solid #555; margin-bottom: 7px; font-size: 16px; }
    .status > * { display: flex; align-items: center; justify-content: center; border-right: 1px solid #555; white-space: nowrap; padding: 1px 11px 0; }
    .status .xy { width: 110px; }
    .status .cp { width: 70px; }
    .status .layer { flex: 1; justify-content: flex-start; padding: 0 4px; gap: 2px; }
    .chip { width: 17px; height: 17px; background: #b03c40; border: 1px solid #111; }
    .status .lit { background: #f0f8fc; font-weight: 700; padding: 0 9px; }
    .status .mem { padding: 0 8px 0 4px; }
    .status .end { padding: 0; width: 9px; border: 0; }

    .mark { position: absolute; left: 1554px; top: 924px; color: #a4a4a4c0; font-family: "Open Sans", sans-serif; font-size: 24px; line-height: 32px; pointer-events: none; }
    .mark p { margin: 0; font-size: 17px; line-height: 28px; }

    .rec { position: absolute; left: 826px; top: 14px; width: 581px; height: 55px; display: flex; align-items: center; background: #191d2c; border: 1px solid #667; padding-left: 13px; }
    .rec > button { width: 28px; height: 28px; margin-right: 9px; }
    .rec .hot { border-radius: 50%; box-shadow: 0 0 0 4px #2c2e3f; background: #2c2e3f; }
    .rec .clock { width: 122px; height: 28px; margin: 0 22px 0 10px; }
    .rec .mini { position: absolute; right: 0; top: 0; display: flex; gap: 2px; }
    .rec .mini button { width: 17px; height: 17px; }

    .task { display: flex; height: 50px; flex: none; background: linear-gradient(90deg, #20353e, #21343e 55%, #1b2440); color: #fff; font-family: "Open Sans", sans-serif; font-size: 16px; }
    .start { width: 60px; }
    .search { width: 360px; background: #f4f4f4; color: #333; display: flex; align-items: center; padding-left: 12px; }
    .search input { flex: 1; min-width: 0; font-size: 17px; margin-left: 10px; outline: 0; }
    .search input::placeholder { color: #3c3c3c; opacity: 1; }
    .apps { display: flex; }
    .apps button { width: 62px; height: 50px; }
    .apps .run { background: linear-gradient(#78b4ec, #78b4ec) center bottom / 51px 3px no-repeat; }
    .tray { margin-left: auto; display: flex; align-items: center; }
    .wx { gap: 10px; margin-right: 24px; height: 50px; font-size: 17px; }
    .tray .ic { width: 30px; height: 50px; }
    .eng { margin: 0 11px 0 8px; font-size: 15px; }
    .when { flex-direction: column; font-size: 14px; line-height: 23px; width: 80px; margin-right: 16px; }
    .peek { width: 17px; height: 50px; border-right: 1px solid #556; margin-right: 5px; }
  `;

  private head(t: string) {
    return html`<header class="head"><h2>${t}</h2><button aria-label="Close ${t}"><svg width="11" height="11" viewBox="0 0 11 11"><path d="M1 1l9 9M10 1l-9 9" stroke="#c03040" stroke-width="1.500"/></svg></button></header>`;
  }

  private row([name, color, on]: Layer) {
    return html`<div class="lrow">
      <span class=${classMap({ name: true, cur: name === "Finger" })}>${name}</span>
      <div class="ctl">
        <button class="ex" aria-label="Expand ${name}"><svg width="6" height="10"><path d="M0 0l6 5-6 5z" fill="#fff"/></svg></button>
        <button class="sw" aria-label="Color of ${name}" style="background:${color}"></button>
        <button class="lk" aria-label="Lock ${name}"><svg width="11" height="13"><path d="M4 6V3q0-2 2-2t2 2" fill="none" stroke="#ccc" stroke-width="1.500"/><rect x="1" y="6" width="9" height="6" fill="#ccc"/></svg></button>
        <button class=${classMap({ tog: true, on })} aria-pressed=${on} aria-label="Show ${name}">${on ? html`<i></i>` : html`<svg width="10" height="10"><circle cx="5" cy="5" r="4" fill="none" stroke="#6c8cd8" stroke-width="1.500"/></svg>`}</button>
      </div></div>`;
  }

  private band(b: [Layer[], Layer[]]) {
    return html`<div class="band">${b.map((h) => html`<div class="half"><div>${h.map((l) => this.row(l))}</div><div class="strip"></div></div>`)}</div>`;
  }

  private side() {
    return html`<aside class="side">
      ${this.head("ICON HISTORY")}
      <div class="hist">${["measure", "vball", "folder"].map((n) => tool(n, ""))}<span class="grow"></span>${["back", "fwd"].map((n) => html`<button class="nav" aria-label=${n}>${icon(n)}</button>`)}</div>
      ${this.head("MAIN MENU")}
      <nav class="tabs1"><button>File</button><button>View</button><button>Utilities</button><button class="cur">Measure</button><button>Custom</button><button class="last">Reset</button></nav>
      <div class="cats">${CATEGORIES.map((r, i) => html`<div>${r.map(([n, c], j) => html`<button class=${classMap({ cat: true, push: i === 0 && j === 5 })}><span class="dot" style="background:radial-gradient(circle at 35% 30%, #fff, ${c} 45%)"></span>${n}</button>`)}</div>`)}</div>
      <div class="tools">${["angle", "dimD", "dimL", "dimR", "dimH", "dimV", "ordinate", "dimA", "measure", "diam", "rad", "leader", "text", "textPlus", "dimAng", "dimLead", "ring"].map((n) => tool(n))}</div>
      <div class="tools mods">${["cubes", "arc", "arcDots", "puzzle", "move", "rotate", "burst", "link", "unlink", "cut", "torus"].map((n) => tool(n))}</div>
      ${this.head("DISPLAY")}
      <div class="display">
        <div class="group dl">
          <div class="icons">${["grid", "jack", "ballBlue"].map((n) => tool(n, "btn on"))}${["ballPink", "globe", "views"].map((n) => tool(n, "btn"))}</div>
          <div class="pick"><select aria-label="Mesh"><option>Coarse Mesh</option></select><svg width="12" height="8"><path d="M1 1l5 6 5-6" fill="none" stroke="#777" stroke-width="2"/></svg></div>
        </div>
        <div class="group dr">
          <div class="col">
            <div class="icons">${["matUser", "matBox", "matSphere", "matDisplay", "matWire"].map((n) => tool(n, n === "matDisplay" ? "btn on" : "btn flat"))}</div>
            <div class="pick"><select aria-label="Material"><option>Plastic</option></select><svg width="12" height="8"><path d="M1 1l5 6 5-6" fill="none" stroke="#777" stroke-width="2"/></svg></div>
          </div>
          <button class="bigtog" aria-label="Display on"><i></i></button>
        </div>
      </div>
      ${this.head("SNAPS")}
      <div class="snaps">
        <div class="srow">${["sPerp", "sTan", "sInt", "sPoint", "sMid2", "sQuad", "sCen", "sMid", "sEnd"].map((n, i) => tool(n, [4, 5, 7, 8].includes(i) ? "btn on" : "btn"))}<button class="btn wide" aria-label="Snaps off">${icon("sO")}</button></div>
        <div class="srow srow2">${["gCplane", "gCube", "gLine", "g45", "gPlane", "gAxis"].map((n, i) => tool(n, i === 3 ? "btn gap" : "btn"))}
          <div class="nums"><button>0.1</button><button>0.25</button><button class="cur">0.5</button><button>1.0</button></div>${tool("gHash", "btn hash")}</div>
      </div>
      ${this.head("INFO & SETTINGS")}
      <div class="info">
        <div>${["iGears", "iWrench", "iBox", "iDocBox", "iScroll", "iEdit", "iBag"].map((n) => tool(n))}</div>
        <div class="acts raised">${tool("iBroom", "btn on")}${tool("iPlay", "btn on")}${tool("iRec", "btn on")}${tool("iDel", "btn plain")}</div>
        <div>${["iViews", "iMonitor", "iWire", "iBook", "iFunnel", "iCheck", "iReport"].map((n) => tool(n))}</div>
        <div class="acts">${tool("gumA", "btn")}${tool("gumB", "btn flat")}${tool("gumC", "btn flat")}${tool("gumD", "btn on")}</div>
      </div>
      ${this.head("LAYERS")}
      <div class="layers">
        <div class="top">${this.row(["Lights", "#ffffff", false])}
          <button class="hs">Hide<svg width="21" height="12"><ellipse cx="10" cy="6" rx="10" ry="5.500" fill="#aaa"/></svg></button>
          <button class="hs">Show<svg width="21" height="12"><path d="M0 6q10-11 21 0-11 11-21 0z" fill="#fff"/><circle cx="10.500" cy="6" r="4" fill="#222"/><circle cx="10" cy="5" r="1.500" fill="#fff"/></svg></button>
        </div>
        ${LAYERS.slice(0, 2).map((b) => this.band(b))}
        <div class="fold"><hr /><button aria-label="Collapse"><svg width="16" height="16"><circle cx="8" cy="8" r="7" fill="#555" stroke="#999"/><path d="M4 10l4-4 4 4z" fill="#fff"/></svg></button><hr /></div>
        ${LAYERS.slice(2).map((b) => this.band(b))}
      </div>
      ${this.head("PROJECTS")}
      <div class="proj">
        <ul><li class="cur">Default</li><li>profile</li></ul>
        <svg class="bar" height="40" viewBox="0 0 12 40"><path d="M1 5l5-5 5 5z" fill="#aaa"/><rect x="1" y="6" width="10" height="11" fill="#777" stroke="#999"/><path d="M6 18V40" stroke="#aaa" stroke-width="4"/></svg>
        <div class="thumbs">${[1, 2, 3].map((n) => html`<div class="thumb"><b>${n}</b>${n === 1
          ? html`<svg width="24" height="24"><path d="M3 7l6-3 3 2 7-2-3 6 4 3-3 7H5l3-6-4-1z" fill="#f8b818"/><path d="M8 9l5 1-2 4" stroke="#8a5c00" fill="none"/></svg>`
          : n === 2 ? html`<svg width="40" height="24"><path d="M2 24Q5 3 20 3t18 21M20 3V24M8 24q4-12 12-12t12 12M6 14l10 4 16-2" fill="none" stroke="#1c8868" stroke-width="1.500"/></svg>` : nothing}
          <button aria-label="Open project ${n}"><svg width="6" height="10"><path d="M0 0l6 5-6 5z" fill="#fff"/></svg></button></div>`)}</div>
      </div>
    </aside>`;
  }

  private main() {
    const tab = (t: string, cls = "") => html`<button class="vt ${cls}"><svg width=${cls === "cur" ? 21 : 13} height="24">${cls === "cur"
      ? svg`<path d="M0 24L18.500 .5H22V24z"/>` : svg`<path d="M.5 25V11L10.500 .5H14V25z"/>`}</svg><span>${cls === "add" ? html`<svg width="17" height="12"><path d="M7 1h3v4h4v3h-4v4H7V8H3V5h4z" style="fill:#eee"/></svg>` : t}</span></button>`;
    return html`<main class="main">
      <section class="cmd">
        <div class="grip"></div>
        <div class="out"><div class="hist2"><p>Dimension location:</p><p>Drag gumball, tap Alt to make a duplicate:</p></div><label>Command:<input aria-label="Command" /></label></div>
        <div class="scroll">
          <button aria-label="Scroll up"><svg width="10" height="7"><path d="M1 6l4-4 4 4" fill="none" stroke="#555" stroke-width="2"/></svg></button>
          <button class="low" aria-label="Scroll down"><svg width="10" height="7"><path d="M1 1l4 4 4-4" fill="none" stroke="#555" stroke-width="2"/></svg></button>
          <button class="mini" aria-label="Previous command"><svg width="8" height="5"><path d="M0 5l4-4 4 4z"/></svg></button>
          <button class="mini" aria-label="Next command"><svg width="8" height="5"><path d="M0 0l4 4 4-4z"/></svg></button>
        </div>
      </section>
      <nav class="vtabs">${tab("Perspective")}${tab("Through Finger")}${tab("Side View")}${tab("Looking Down", "cur")}${tab("", "add")}</nav>
      <section class="view">
        <svg viewBox="0 0 1524 784" preserveAspectRatio="xMidYMid slice" role="img" aria-label="Looking Down view">${viewport}</svg>
        <button class="vname">Looking Down<svg width="14" height="18"><path d="M2 6h10l-5 6z"/></svg></button>
      </section>
      <section class="osnap"><div class="grip"></div>
        ${OSNAPS.map(([n, on]) => html`<label><input type="checkbox" .checked=${on} />${n}</label>`)}
        <label class="wide"><input class="gray" type="checkbox" />Project</label>
        <label class="act wide"><input class="mixed" type="checkbox" />Disable</label>
      </section>
      <footer class="status"><button class="cp">CPlane</button><span class="xy">x -41.683</span><span class="xy">y -22.323</span><span class="xy">z 0.000</span><span class="xy">Millimeters</span>
        <button class="layer"><i class="chip"></i>Finger Sizes</button><button>Grid Snap</button><button>Ortho</button><button>Planar</button><button>Osnap</button><button>SmartTrack</button><button class="lit">Gumball</button><button class="lit">Record History</button><button>Filter</button><span class="mem">Memory use:...</span><span class="end"></span></footer>
    </main>`;
  }

  private recorder() {
    return html`<section class="rec">
      ${tool("record", "")}${tool("pause", "")}
      <svg class="clock" viewBox="0 0 122 28"><g font-family="Liberation Sans, sans-serif" font-size="26" fill="none" stroke="#5c606e" stroke-dasharray="1 1.500" stroke-width=".8"><text x="0" y="23">00</text><text x="34" y="23">:</text><text x="46" y="23">00</text><text x="80" y="23">:</text><text x="92" y="23">00</text></g></svg>
      ${["alarm", "camera", "speaker", "mic", "webcam", "pencil", "cursor", "expand", "eye"].map((n) => tool(n, n === "camera" ? "hot" : ""))}
      <div class="mini">
        <button aria-label="Open folder"><svg width="16" height="14"><path d="M0 1h6l2 2h6v3H0z" fill="#f89810"/><path d="M0 13V4h6l2-1h8l-1 10z" fill="#fcc010"/></svg></button>
        <button aria-label="Settings"><svg width="16" height="16"><circle cx="8" cy="8" r="4.500" fill="none" stroke="#5c6e80" stroke-width="3"/><circle cx="8" cy="8" r="7" fill="none" stroke="#5c6e80" stroke-width="2" stroke-dasharray="3 2.500"/></svg></button>
        <button aria-label="Minimize"><svg width="10" height="10"><path d="M0 8H10" stroke="#4a78a0" stroke-width="1.500"/></svg></button>
        <button aria-label="Close recorder"><svg width="9" height="10"><path d="M0 1l8 8M8 1L0 9" stroke="#cc3310" stroke-width="1.500"/></svg></button>
      </div>
    </section>`;
  }

  private taskbar() {
    return html`<footer class="task">
      <button class="start" aria-label="Start">${icon("windows")}</button>
      <label class="search"><svg width="28" height="28"><circle cx="17" cy="10" r="7" fill="none" stroke="#222" stroke-width="1.500"/><path d="M12 15L3 24" stroke="#222" stroke-width="1.500"/></svg><input type="search" aria-label="Search" placeholder="Type here to search" />
        <svg width="96" height="46" viewBox="0 0 96 46"><path d="M2 24q12 3 11 12l6 4-7-2Q1 37 2 24zM94 26q-11 1-13 9l-6 4 8-2q11-1 11-11z" fill="#d8702c"/><path d="M17 24l8 14q20 9 42 0l10-14z" fill="#ddd4c4"/><path d="M13 18l4-2 2-4 5 0 4-4 5 1 6-3 4 2h8l4-2 6 3 5-1 4 4 5 0 2 4 4 2-2 4 0 4-6 1-4 4-6-1-6 3-6-2h-8l-6 2-6-3-6 1-4-4-6-1 0-4z" fill="#ecbc68"/><ellipse cx="47" cy="18" rx="27" ry="9" fill="#d8802c"/><ellipse cx="47" cy="17" rx="11" ry="5" fill="#f4e8d4"/><path d="M38 14Q46 12 47 1q6 4 8 12-8 5-17 1z" fill="#fff8ec"/></svg></label>
      <nav class="apps">${["taskview", "copilot", "edge", "explorer", "wcoin", "outlook", "store", "whatsapp", "telegram", "chrome", "vapp", "matrix"].map((n) => html`<button aria-label=${n} class=${["explorer", "vapp", "matrix"].includes(n) ? "run" : ""}>${icon(n)}</button>`)}</nav>
      <div class="tray">
        <button class="wx">${icon("weather")}<span>25°C</span><span>Partly cloudy</span></button>
        ${["chevUp", "sync", "battery", "wifi", "sound"].map((n) => html`<button class="ic" aria-label=${n}>${icon(n, "i24")}</button>`)}
        <button class="eng">ENG</button>
        <button class="when"><span>7:26 PM</span><span>10/15/2025</span></button>
        <button aria-label="Notifications">${icon("notes")}</button><span class="peek"></span>
      </div>
    </footer>`;
  }

  render() {
    return html`
      <header class="title"><svg class="i20" viewBox="0 0 20 20">${mLogo}</svg><span>Matrix 9.0 (64-bit) - 3.3dm</span><span class="grow"></span>
        <button aria-label="Minimize"><svg width="12" height="12"><path d="M0 5.500H12" stroke="#888"/></svg></button>
        <button aria-label="Restore"><svg width="12" height="12"><path d="M.5 2.500h9v9h-9zM2.500 2.500v-2h9v9h-2" fill="none" stroke="#888"/></svg></button>
        <button aria-label="Close"><svg width="12" height="12"><path d="M0 0l12 12M12 0L0 12" stroke="#888"/></svg></button></header>
      <nav class="menu">${MENU.map((m) => html`<button>${m}</button>`)}</nav>
      <div class="work">${this.side()}${this.main()}</div>
      ${this.taskbar()}
      <div class="mark">Activate Windows<p>Go to Settings to activate Windows.</p></div>
      ${this.recorder()}`;
  }
}
